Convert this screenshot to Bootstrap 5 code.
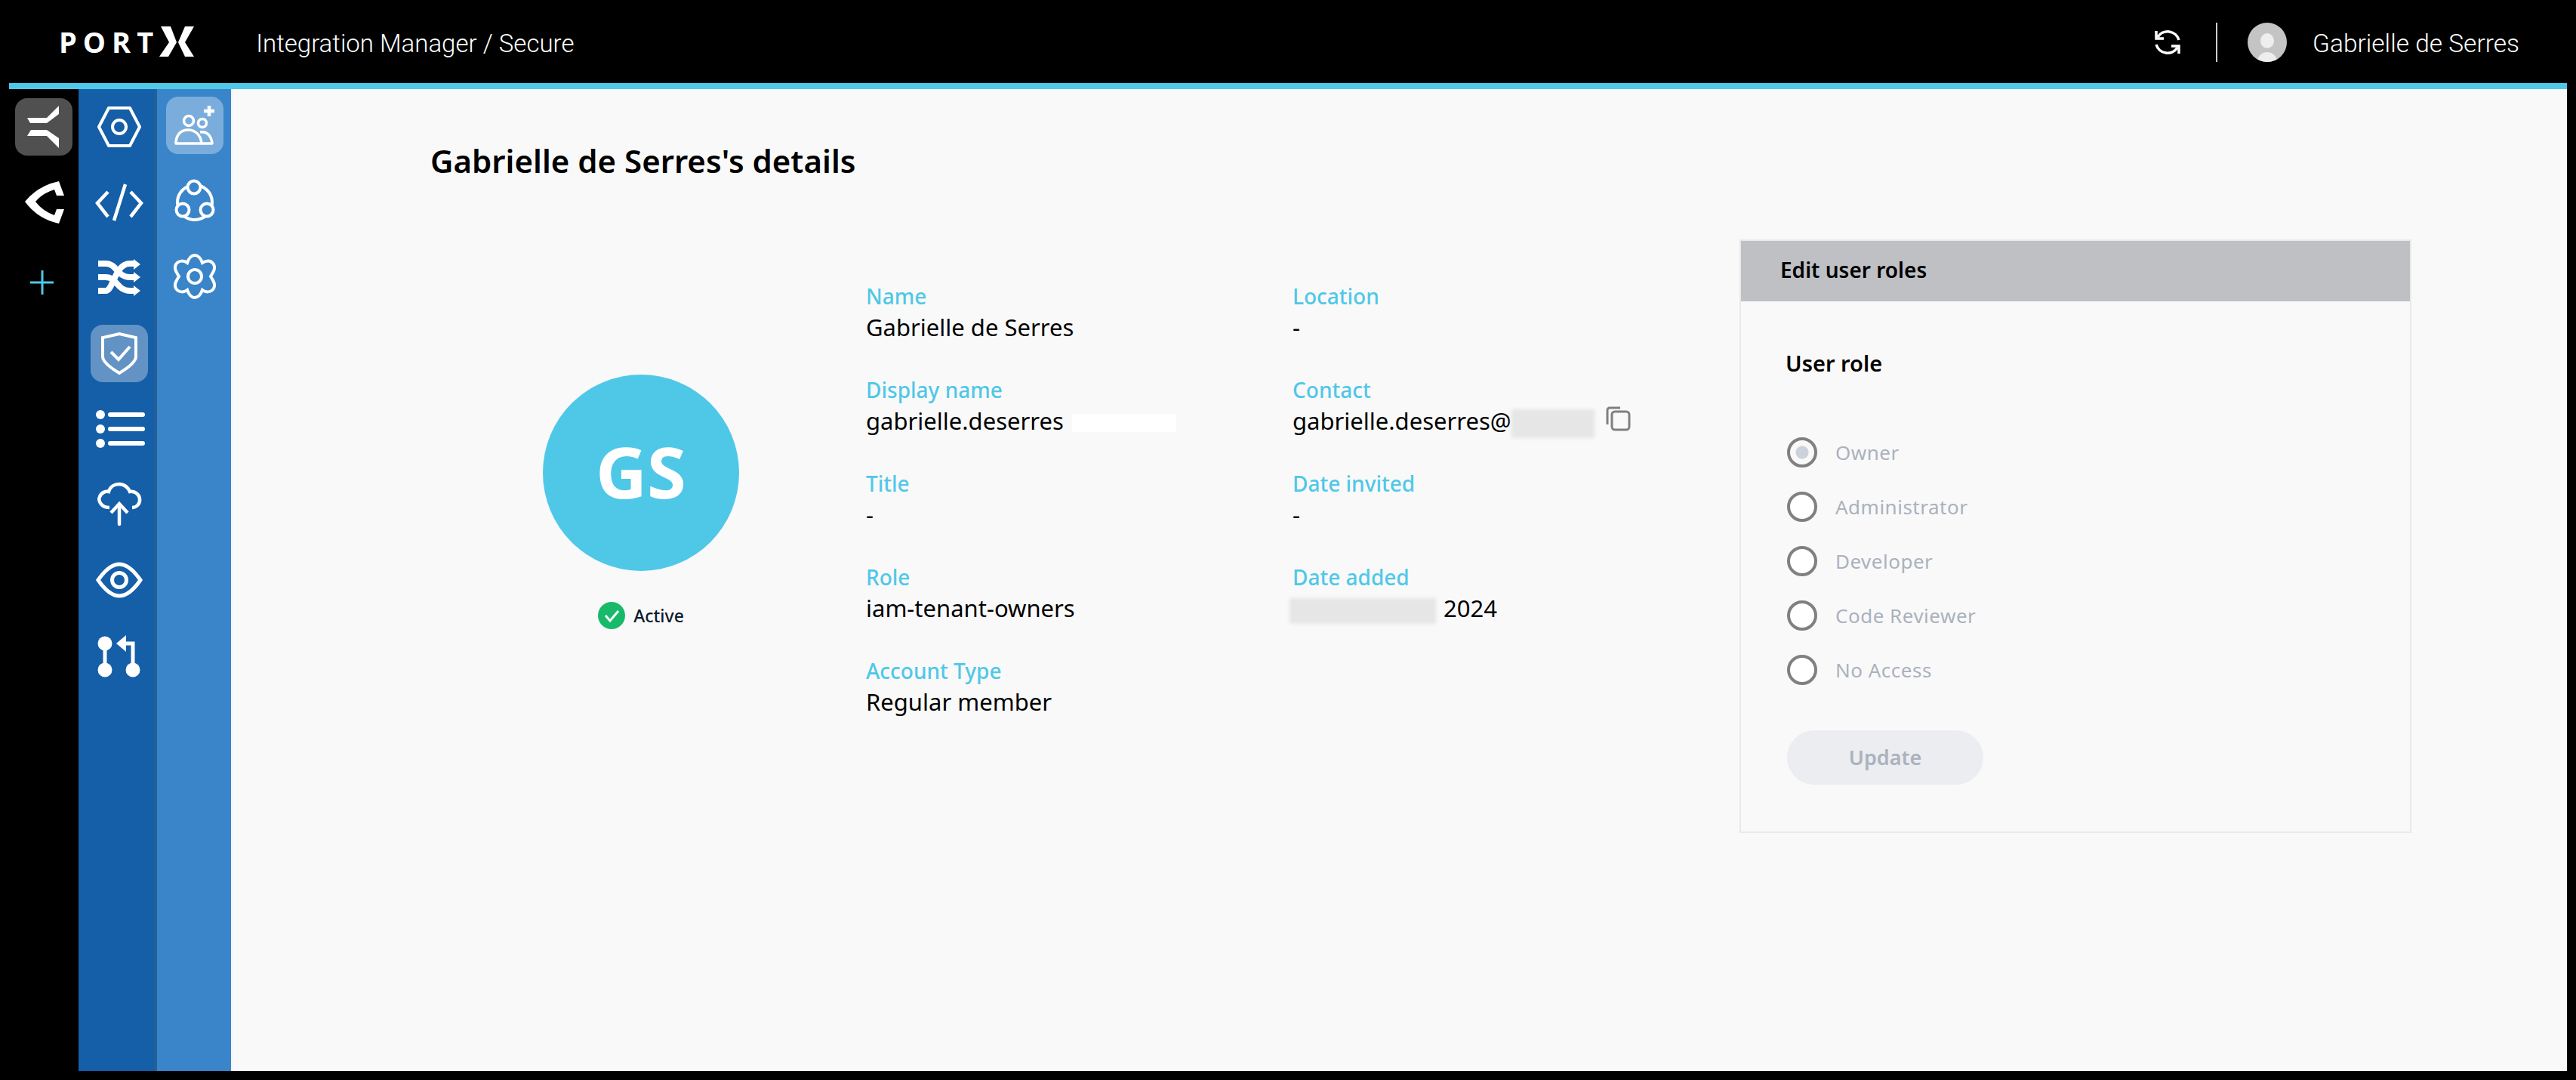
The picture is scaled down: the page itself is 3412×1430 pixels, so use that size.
<!DOCTYPE html>
<html lang="en">
<head>
    <meta charset="UTF-8">
    <meta name="viewport" content="width=device-width, initial-scale=1.0">
    <title>PortX - User details</title>
    <link rel="stylesheet" href="https://cdn.jsdelivr.net/npm/bootstrap@5.3.2/dist/css/bootstrap.min.css">
    <style>
        body { background: #000; font-family: "Noto Sans", sans-serif; color: #000; }
        .top-bar { height: 110px; padding-top: 6px; font-family: "Roboto", sans-serif; font-weight: 300; color: #fff; font-size: 33px; }
        .brand-text { font-family: "Open Sans", sans-serif; font-weight: 700; font-size: 38px; letter-spacing: 8px; line-height: 1; }
        .brand-box { margin-left: 78px; margin-top: -6px; }
        .top-title { margin-left: 82px; }
        .top-right { margin-right: 75px; margin-top: -4px; }
        .top-user { margin-left: 34px; margin-top: 4px; font-size: 33.5px; }
        .top-divider { width: 2px; height: 52px; background: #ccc; margin: 0 40px 0 46px; }
        .app-frame { height: 1308px; margin: 0 12px; border-top: 8px solid #4fc8e8; }
        .rail-tile { width: 76px; height: 76px; border-radius: 16px; flex: none; }
        .rail-tile svg { display: block; }
        .rail-one { width: 92px; padding: 12px 0 0 8px; gap: 24px; }
        .rail-two { width: 104px; padding: 12px 0 0 16px; gap: 24px; background: #155ea8; border-right: 4px solid #22609a; }
        .rail-three { width: 98px; padding: 10px 0 0 12px; gap: 24px; background: #3a85ca; }
        .tile-dark { background: #505050; }
        .tile-active { background: rgba(255,255,255,.33); }
        .plus-tile { margin-top: 6px; }
        .main-area { background: #f9f9f9; border-left: 2px solid #f2f2f2; padding: 0 0 0 262px; }
        .page-title { font-size: 42px; font-weight: 600; margin: 68px 0 0; line-height: 54px; height: 131px; }
        .profile-col { width: 577px; padding: 179px 19px 0 0; }
        .avatar-big { width: 260px; height: 260px; padding-bottom: 4px; background: #4fc8e8; color: #fff; font-size: 94px; font-weight: 700; }
        .status-row { margin-top: 41px; font-size: 23px; font-weight: 500; color: #0d1b2e; line-height: 36px; gap: 11px; }
        .details-grid { display: grid; grid-template-columns: 565px 592px; grid-auto-rows: 124px; padding-top: 59px; }
        .field-label { color: #4fc8e8; font-weight: 500; font-size: 28px; line-height: 32px; }
        .field-value { font-size: 31px; line-height: 40px; margin-top: 5px; white-space: nowrap; }
        .mask-white { display: inline-block; width: 138px; height: 24px; background: #fff; margin-left: 11px; vertical-align: -3px; }
        .mask-blur { display: inline-block; background: #e6e6e6; filter: blur(2px); vertical-align: middle; }
        .mask-mail { width: 110px; height: 38px; }
        .mask-date { width: 194px; height: 34px; margin-left: -4px; margin-right: 10px; }
        .copy-icon { margin-left: 15px; vertical-align: -2px; }
        .roles-card { width: 890px; height: 786px; background: transparent; border: 2px solid #e8e9ea; border-radius: 0; }
        .roles-card .card-header { background: #bfc0c4; height: 80px; border: 0; border-radius: 0; padding: 0 0 0 52px; font-size: 28px; font-weight: 600; line-height: 76px; }
        .roles-card .card-body { padding: 60px 61px 0; }
        .role-heading { font-size: 29px; font-weight: 600; line-height: 44px; margin: 0 0 60px -2px; }
        .role-option { display: flex; align-items: center; height: 72px; margin: 0; padding: 0; gap: 24px; }
        .role-option .form-check-input { width: 40px; height: 40px; margin: 0; float: none; background-color: #fff; background-image: none; border: 4px solid #808080; opacity: 1; }
        .role-option .form-check-input:checked { background: radial-gradient(circle, #ccd2d9 0 8px, #f9f9f9 9px); }
        .role-option .form-check-input:disabled ~ .form-check-label { color: #aab2bd; font-size: 26px; opacity: 1; letter-spacing: .5px; }
        .update-btn { --bs-btn-disabled-bg: #ebedf0; --bs-btn-disabled-color: #aab2bd; --bs-btn-disabled-border-color: #ebedf0; --bs-btn-disabled-opacity: 1; width: 260px; height: 72px; margin-top: 44px; font-size: 27px; font-weight: 600; }
    </style>
</head>
<body class="overflow-hidden">
    <!-- Top bar -->
    <header class="top-bar d-flex align-items-center">
        <div class="brand-box d-flex align-items-center">
            <span class="brand-text">PORT</span>
            <svg width="46" height="40" viewBox="218 38 46 40" fill="#fff">
                <path d="M220 38h13l8 21-11 19h-12l13-19z"/>
                <path d="M252 38h12l-12 21 12 19h-12l-9-19z"/>
            </svg>
        </div>
        <span class="top-title">Integration Manager / Secure</span>
        <div class="top-right d-flex align-items-center ms-auto">
            <svg width="36" height="36" viewBox="0 0 36 36" fill="none" stroke="#fff" stroke-width="3.5">
                <path d="M33 15A15.5 15.5 0 0 0 5 11"/><path d="M3 3v10h10"/>
                <path d="M3 21a15.5 15.5 0 0 0 28 4"/><path d="M33 33V23H23"/>
            </svg>
            <span class="top-divider"></span>
            <svg width="52" height="52" viewBox="0 0 52 52">
                <clipPath id="avatarClip"><circle cx="26" cy="26" r="26"/></clipPath>
                <g clip-path="url(#avatarClip)">
                    <rect width="52" height="52" fill="#c4c4c4"/>
                    <ellipse cx="26" cy="24" rx="9" ry="10" fill="#eee"/>
                    <ellipse cx="26" cy="52" rx="13" ry="13" fill="#eee"/>
                </g>
            </svg>
            <span class="top-user">Gabrielle de Serres</span>
        </div>
    </header>

    <div class="app-frame d-flex">
        <!-- Product rail -->
        <nav class="rail-one d-flex flex-column">
            <div class="rail-tile tile-dark">
                <svg width="76" height="76" viewBox="20 130 76 76" fill="#fff">
                    <path d="M78 140v11l-16 12H40l-4-7h26z"/>
                    <path d="M41 172h21l16 11v13l-16-16H36z"/>
                </svg>
            </div>
            <div class="rail-tile">
                <svg width="76" height="76" viewBox="20 230 76 76" fill="#fff">
                    <path d="M78 240l7 19H75l-3-8Q56 256 47 267q9 12 25 18l3-8h10l-7 19Q50 290 33 267q17-21 45-27z"/>
                </svg>
            </div>
            <div class="rail-tile plus-tile">
                <svg width="76" height="76" viewBox="20 336 76 76" fill="none" stroke="#4fc8e8" stroke-width="3">
                    <path d="M40 374h31M56 358v32"/>
                </svg>
            </div>
        </nav>

        <!-- Section rail -->
        <nav class="rail-two d-flex flex-column">
            <div class="rail-tile">
                <svg width="76" height="76" viewBox="120 130 76 76" fill="none" stroke="#fff" stroke-width="4" stroke-linejoin="round">
                    <path d="M144 143h28l13 25-13 25h-28l-13-25z"/>
                    <circle cx="158" cy="168" r="9"/>
                </svg>
            </div>
            <div class="rail-tile">
                <svg width="76" height="76" viewBox="120 230 76 76" fill="none" stroke="#fff" stroke-width="4.5">
                    <path d="M143 254l-14 15 14 18M173 254l14 15-14 18M166 244l-15 48"/>
                </svg>
            </div>
            <div class="rail-tile">
                <svg width="76" height="76" viewBox="120 330 76 76" fill="none" stroke="#fff" stroke-width="8">
                    <path d="M130 349h10c15 0 15 18 32 18h6"/>
                    <path d="M130 367h10c15 0 15 18 32 18h6"/>
                    <path d="M130 385h10c10 0 12-36 32-36h6"/>
                    <path fill="#fff" stroke="none" d="M177 343l9 7-9 7zM177 360l9 7-9 7zM177 378l9 7-9 7z"/>
                </svg>
            </div>
            <div class="rail-tile tile-active">
                <svg width="76" height="76" viewBox="120 430 76 76" fill="none" stroke="#fff" stroke-width="4">
                    <path d="M158 442l22 5v25c0 8-12 16-22 22-10-6-22-14-22-22v-25z"/>
                    <path d="M147 466l10 10 15-17"/>
                </svg>
            </div>
            <div class="rail-tile">
                <svg width="76" height="76" viewBox="120 530 76 76" fill="#fff">
                    <circle cx="133" cy="549" r="6"/><circle cx="133" cy="568" r="6"/><circle cx="133" cy="587" r="6"/>
                    <path d="M146 549h43M146 568h43M146 587h43" stroke="#fff" stroke-width="6" stroke-linecap="round"/>
                </svg>
            </div>
            <div class="rail-tile">
                <svg width="76" height="76" viewBox="120 630 76 76" fill="none" stroke="#fff" stroke-width="4.5">
                    <path d="M145 672c-12 0-15-10-13-14 2-6 8-8 12-7 2-7 8-10 14-10 7 0 12 5 14 10 6-1 12 3 13 9 1 7-4 12-10 12"/>
                    <path stroke-linecap="round" d="M158 694v-26"/><path d="M147 679l11-12 11 12"/>
                </svg>
            </div>
            <div class="rail-tile">
                <svg width="76" height="76" viewBox="120 730 76 76" fill="none" stroke="#fff" stroke-width="5">
                    <path d="M130 768c11-16 20-21 28-21s17 5 28 21c-11 16-20 21-28 21s-17-5-28-21z"/>
                    <circle cx="158" cy="768" r="9.5"/>
                </svg>
            </div>
            <div class="rail-tile">
                <svg width="76" height="76" viewBox="120 830 76 76" fill="#fff">
                    <circle cx="139" cy="852" r="9.5"/><circle cx="139" cy="887" r="9.5"/><circle cx="176" cy="887" r="9.5"/>
                    <path d="M139 852v35M176 887v-35h-12" stroke="#fff" stroke-width="5" fill="none"/>
                    <path d="M154 852l13-11v22z"/>
                </svg>
            </div>
        </nav>

        <!-- Sub section rail -->
        <nav class="rail-three d-flex flex-column">
            <div class="rail-tile tile-active">
                <svg width="76" height="76" viewBox="220 128 76 76" fill="none" stroke="#fff" stroke-width="3.5" stroke-linejoin="round">
                    <circle cx="250" cy="160" r="6.5"/><circle cx="268" cy="163" r="5.5"/>
                    <path d="M233 190c0-12 7-18 16-18s17 6 18 18z"/>
                    <path d="M265 175c9-2 15 5 16 15h-14"/>
                    <path d="M277 140v14M270 147h14" stroke-width="4.5"/>
                </svg>
            </div>
            <div class="rail-tile">
                <svg width="76" height="76" viewBox="220 228 76 76" fill="#3a85ca" stroke="#fff" stroke-width="4">
                    <circle cx="258" cy="268" r="23"/>
                    <circle cx="257" cy="248" r="8.5"/><circle cx="242" cy="278" r="8.5"/><circle cx="274" cy="278" r="8.5"/>
                </svg>
            </div>
            <div class="rail-tile">
                <svg width="76" height="76" viewBox="220 328 76 76" fill="none" stroke="#fff" stroke-width="4">
                    <path d="M248 348c2-6 6-10 10-10s8 4 10 10c5-3 11-4 15 2 3 6-1 11-4 16 3 5 7 10 4 16-4 6-11 5-15 2-2 6-6 10-10 10s-8-4-10-10c-4 3-11 4-15-2-3-6 1-11 4-16-3-5-7-10-4-16 4-6 11-5 15-2z"/>
                    <circle cx="258" cy="366" r="9"/>
                </svg>
            </div>
        </nav>

        <!-- Content -->
        <main class="main-area flex-grow-1">
            <h1 class="page-title">Gabrielle de Serres's details</h1>
            <div class="d-flex align-items-start">
                <div class="profile-col d-flex flex-column align-items-center">
                    <div class="avatar-big rounded-circle d-flex align-items-center justify-content-center">GS</div>
                    <div class="status-row d-flex align-items-center">
                        <svg width="36" height="36" viewBox="0 0 36 36">
                            <circle cx="18" cy="18" r="18" fill="#19b96a"/>
                            <path d="M10 18l6 7 11-13" fill="none" stroke="#fff" stroke-width="3"/>
                        </svg>
                        <span>Active</span>
                    </div>
                </div>

                <div class="details-grid">
                    <div><div class="field-label">Name</div><div class="field-value">Gabrielle de Serres</div></div>
                    <div><div class="field-label">Location</div><div class="field-value">-</div></div>
                    <div><div class="field-label">Display name</div><div class="field-value">gabrielle.deserres<span class="mask-white"></span></div></div>
                    <div>
                        <div class="field-label">Contact</div>
                        <div class="field-value">gabrielle.deserres@<span class="mask-blur mask-mail"></span><svg class="copy-icon" width="33" height="33" viewBox="0 0 33 33" fill="none" stroke="#808080" stroke-width="3"><rect x="8" y="7" width="23" height="24" rx="4"/><path d="M2 24V5a3 3 0 0 1 3-3h14"/></svg></div>
                    </div>
                    <div><div class="field-label">Title</div><div class="field-value">-</div></div>
                    <div><div class="field-label">Date invited</div><div class="field-value">-</div></div>
                    <div><div class="field-label">Role</div><div class="field-value">iam-tenant-owners</div></div>
                    <div><div class="field-label">Date added</div><div class="field-value"><span class="mask-blur mask-date"></span>2024</div></div>
                    <div><div class="field-label">Account Type</div><div class="field-value">Regular member</div></div>
                </div>

                <div class="card roles-card">
                    <div class="card-header">Edit user roles</div>
                    <div class="card-body">
                        <div class="role-heading">User role</div>
                        <div class="form-check role-option">
                            <input class="form-check-input" type="radio" name="role" id="roleOwner" checked disabled>
                            <label class="form-check-label" for="roleOwner">Owner</label>
                        </div>
                        <div class="form-check role-option">
                            <input class="form-check-input" type="radio" name="role" id="roleAdmin" disabled>
                            <label class="form-check-label" for="roleAdmin">Administrator</label>
                        </div>
                        <div class="form-check role-option">
                            <input class="form-check-input" type="radio" name="role" id="roleDev" disabled>
                            <label class="form-check-label" for="roleDev">Developer</label>
                        </div>
                        <div class="form-check role-option">
                            <input class="form-check-input" type="radio" name="role" id="roleReview" disabled>
                            <label class="form-check-label" for="roleReview">Code Reviewer</label>
                        </div>
                        <div class="form-check role-option">
                            <input class="form-check-input" type="radio" name="role" id="roleNone" disabled>
                            <label class="form-check-label" for="roleNone">No Access</label>
                        </div>
                        <button type="button" class="btn rounded-pill update-btn" disabled>Update</button>
                    </div>
                </div>
            </div>
        </main>
    </div>

    <script src="https://cdn.jsdelivr.net/npm/bootstrap@5.3.2/dist/js/bootstrap.bundle.min.js"></script>
</body>
</html>
